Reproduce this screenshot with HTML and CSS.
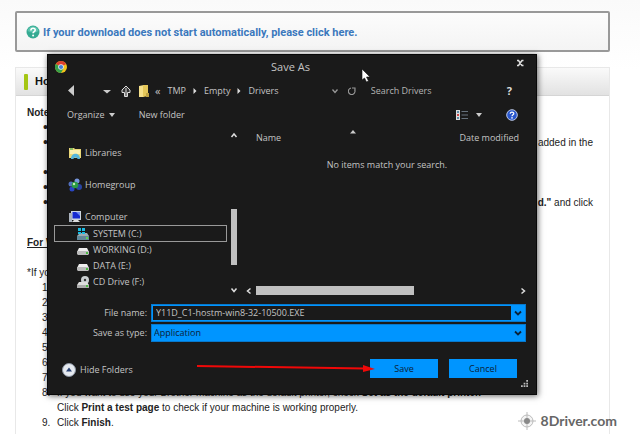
FILE: index.html
```html
<!DOCTYPE html>
<html lang="en">
<head>
    <meta charset="UTF-8">
    <meta name="viewport" content="width=device-width, initial-scale=1.0">
    <title>Driver Download</title>
    <link rel="stylesheet" href="styles.css">
</head>
<body>
    <main class="page">
        <div class="notice">
            <svg class="notice-icon" viewBox="0 0 14 14">
                <circle cx="7" cy="7" r="6.5" fill="#35aa92"/>
                <path d="M1.5 6a5.6 5.6 0 0 1 11 0q-5 3-11 0z" fill="#5cc4ae"/>
                <path d="M4.9 5.4c0-3 4.4-2.7 4.3-.3 0 1.600-2.100 1.500-2.100 3.200" fill="none" stroke="#fff" stroke-width="1.6"/>
                <circle cx="7.100" cy="10.500" r="1" fill="#fff"/>
            </svg>
            <a href="#">If your download does not start automatically, please click here.</a>
        </div>

        <section class="panel">
            <h2 class="panel-header"><span class="marker"></span>How to Install</h2>
            <div class="panel-body">
                <h3>Note:</h3>
                <ul>
                    <li></li>
                    <li class="tall">added in the</li>
                    <li></li>
                    <li></li>
                    <li class="tall"><span><b>d."</b> and click</span></li>
                </ul>
                <h4>For Windows</h4>
                <p>*If you</p>
                <ol>
                    <li></li>
                    <li></li>
                    <li></li>
                    <li></li>
                    <li></li>
                    <li></li>
                    <li></li>
                    <li>If you want to use your Brother machine as the default printer, check <b>Set as the default printer.</b><br>Click <b>Print a test page</b> to check if your machine is working properly.</li>
                    <li>Click <b>Finish</b>.</li>
                </ol>
            </div>
        </section>
    </main>

    <!-- Save As window -->
    <div class="dialog" role="dialog" aria-label="Save As">
        <div class="titlebar">
            <svg class="icon-12" viewBox="0 0 12 12">
                <circle cx="6" cy="6" r="6" fill="#f2c31b"/>
                <path d="M6 6 .8 3A6 6 0 0 1 11.200 3z" fill="#dd4030"/>
                <path d="M6 6 .8 3A6 6 0 0 0 6 12l2.600-4.500z" fill="#36a04a"/>
                <circle cx="6" cy="6" r="2.800" fill="#eee"/>
                <circle cx="6" cy="6" r="2.100" fill="#4481d8"/>
            </svg>
            <span class="title">Save As</span>
            <button class="close" aria-label="Close">
                <svg class="icon-8" viewBox="0 0 8 8"><path d="M1 1.500h1.500L6 6.500h1.500M7.500 1.500H6L2.500 6.500H1" stroke="#ddd" stroke-width="1.500" fill="none"/></svg>
            </button>
        </div>

        <div class="navbar">
            <button class="back" aria-label="Back"><svg class="icon-12" viewBox="0 0 12 12"><path d="M9 0v11L3 5.500z" fill="#ccc"/></svg></button>
            <button aria-label="Recent"><svg class="icon-8" viewBox="0 0 8 8"><path d="M0 3h8L4 6.500z" fill="#ccc"/></svg></button>
            <button aria-label="Up"><svg class="icon-12" viewBox="0 0 12 12"><path d="M6 1 2 5v2.500h2.500V11.500h3V7.500H10V5z" fill="#333" stroke="#ddd"/><path d="M6 3v8" stroke="#ddd"/></svg></button>
            <div class="crumbs">
                <svg class="icon-12" viewBox="0 0 12 12"><path d="M1 1 6 0v12H1z" fill="#f5e08a"/><path d="M5 0h5v11l-5 1z" fill="#e4c75a"/><path d="M8 8h3v4H8z" fill="#bfa343"/></svg>
                <span>«</span>
                <a href="#">TMP</a>
                <svg class="sep" viewBox="0 0 4 8"><path d="M0 0v8l4-4z" fill="#ddd"/></svg>
                <a href="#">Empty</a>
                <svg class="sep" viewBox="0 0 4 8"><path d="M0 0v8l4-4z" fill="#ddd"/></svg>
                <a href="#">Drivers</a>
            </div>
            <button aria-label="Previous locations"><svg class="icon-8" viewBox="0 0 8 8"><path d="M1.500 2.500 4 5.500l2.500-3" stroke="#999" stroke-width="1.300" fill="none"/></svg></button>
            <button aria-label="Refresh"><svg class="icon-8" viewBox="0 0 8 8"><path d="M3 1A3.300 3.300 0 1 0 6.500 2.500M4 1h3v3" stroke="#999" stroke-width="1.100" fill="none"/></svg></button>
            <input class="search" type="text" placeholder="Search Drivers" aria-label="Search Drivers">
            <button class="tip" aria-label="Tip">?</button>
        </div>

        <div class="toolbar">
            <button>Organize <svg class="icon-6" viewBox="0 0 6 6"><path d="M0 1h6L3 5z" fill="#ccc"/></svg></button>
            <button>New folder</button>
            <div class="view">
                <button aria-label="Change view">
                    <svg class="icon-12" viewBox="0 0 12 12"><path d="M0 1h4v10H0z" fill="#ddd"/><path d="M1 2h2v2H1zM1 8h2v2H1z" fill="#5d8aa5"/><path d="M1 5h2v2H1z" fill="#c44"/><path d="M5.500 2.500H12M5.500 6H12M5.500 9.500H12" stroke="#66717c"/></svg>
                    <svg class="icon-6" viewBox="0 0 6 6"><path d="M0 1h6L3 5z" fill="#ccc"/></svg>
                </button>
                <button aria-label="Help">
                    <svg class="icon-12" viewBox="0 0 12 12"><circle cx="6" cy="6" r="5.300" fill="#2856cc" stroke="#bbc7e4"/><path d="M4.200 4.700c0-2.300 3.700-2 3.600-.2 0 1.300-1.800 1.200-1.800 2.700" stroke="#fff" stroke-width="1.200" fill="none"/><circle cx="6" cy="8.900" r=".8" fill="#fff"/></svg>
                </button>
            </div>
        </div>

        <div class="browser">
            <nav class="tree">
                <a href="#" class="root">
                    <svg class="icon-14" viewBox="0 0 14 14"><path d="M1 2h5l1 1h6v9H1z" fill="#ead778"/><path d="M2 4h10v4H2z" fill="#faf0b0"/><path d="M3 13c0-7 9-7 9 0H9.500c0-2-4-2-4 0z" fill="#55b5dc"/><path d="M2 2h3v2H2z" fill="#8bbd62"/></svg>
                    Libraries
                </a>
                <a href="#" class="root">
                    <svg class="icon-14" viewBox="0 0 14 14"><circle cx="3" cy="6" r="2.500" fill="#5270bd"/><circle cx="9" cy="3" r="2.500" fill="#7696dd"/><circle cx="11" cy="9" r="3" fill="#2946a3"/><circle cx="4" cy="11" r="2.500" fill="#2946c3"/><circle cx="7" cy="7" r="3.300" fill="#2a9b45"/><circle cx="6" cy="6" r="1.200" fill="#c3ecb5"/></svg>
                    Homegroup
                </a>
                <a href="#" class="root">
                    <svg class="icon-14" viewBox="0 0 14 14"><path d="M3 1h10v9H3z" fill="#ccd5df"/><path d="M4.500 2h7.500v6.500H4.500z" fill="#162ad0"/><path d="M8 2h4v4z" fill="#6f8af0"/><path d="M1 3h3v9H1z" fill="#aab2bd"/><path d="M6 10h4l2 2H4z" fill="#ddd"/></svg>
                    Computer
                </a>
                <a href="#" class="drive selected">
                    <svg class="icon-12" viewBox="0 0 12 12"><path d="M1 7 3 5h7l2 3v4H0V8z" fill="#9eabb1"/><path d="M0 8h12v4H0z" fill="#62889a"/><path d="M1 0h3v3H1zM5 0h3v3H5zM1 4h3v2H1zM5 4h3v2H5z" fill="#19bde4"/><path d="M9 9h2v2H9z" fill="#60d452"/></svg>
                    SYSTEM (C:)
                </a>
                <a href="#" class="drive">
                    <svg class="icon-12" viewBox="0 0 12 12"><path d="m0 8 2-4h8l2 4z" fill="#eee"/><path d="M0 7h12v3l-1 1H1l-1-1z" fill="#bbb"/><path d="M9 8h2v2H9z" fill="#4bbb42"/></svg>
                    WORKING (D:)
                </a>
                <a href="#" class="drive">
                    <svg class="icon-12" viewBox="0 0 12 12"><path d="m0 8 2-4h8l2 4z" fill="#eee"/><path d="M0 7h12v3l-1 1H1l-1-1z" fill="#bbb"/><path d="M9 8h2v2H9z" fill="#4bbb42"/></svg>
                    DATA (E:)
                </a>
                <a href="#" class="drive">
                    <svg class="icon-12" viewBox="0 0 12 12"><circle cx="8" cy="4" r="4" fill="#c9ced1"/><circle cx="8" cy="4" r="1.200" fill="#333"/><path d="m0 9 2-3h8l2 3v3H0z" fill="#ddd"/><path d="M0 9h12v3H0z" fill="#aaa"/><path d="M9 9h2v2H9z" fill="#4bbb42"/></svg>
                    CD Drive (F:)
                </a>
            </nav>
            <div class="vscroll">
                <svg class="icon-8" viewBox="0 0 8 8"><path d="M1.500 6 4 3l2.500 3" stroke="#ddd" stroke-width="1.500" fill="none"/></svg>
                <div class="vtrack"><div class="vthumb"></div></div>
                <svg class="icon-8" viewBox="0 0 8 8"><path d="M1.500 2.500 4 5.500l2.500-3" stroke="#ddd" stroke-width="1.500" fill="none"/></svg>
            </div>
            <div class="files">
                <div class="columns">
                    <span>Name</span>
                    <svg class="icon-6" viewBox="0 0 6 6"><path d="M0 3.500h6L3 0z" fill="#ccc"/></svg>
                    <span>Date modified</span>
                </div>
                <p class="empty">No items match your search.</p>
                <div class="hscroll">
                    <svg class="icon-8" viewBox="0 0 8 8"><path d="M5.500 1.500 2.500 4l3 2.500" stroke="#ddd" stroke-width="1.500" fill="none"/></svg>
                    <div class="htrack"><div class="hthumb"></div></div>
                    <svg class="icon-8" viewBox="0 0 8 8"><path d="M3.500 1.500 6.500 4l-3 2.500" stroke="#ddd" stroke-width="1.500" fill="none"/></svg>
                </div>
            </div>
        </div>

        <form class="fields">
            <label for="fileName">File name:</label>
            <div class="combo">
                <input id="fileName" type="text" value="Y11D_C1-hostm-win8-32-10500.EXE">
                <svg class="icon-8" viewBox="0 0 8 8"><path d="M1 2.500 4 5.500l3-3" stroke="#0a2238" stroke-width="1.800" fill="none"/></svg>
            </div>
            <label for="fileType">Save as type:</label>
            <div class="combo">
                <select id="fileType"><option>Application</option></select>
                <svg class="icon-8" viewBox="0 0 8 8"><path d="M1 2.500 4 5.500l3-3" stroke="#0a2238" stroke-width="1.800" fill="none"/></svg>
            </div>
        </form>

        <div class="actions">
            <button class="hide">
                <svg class="icon-14" viewBox="0 0 14 14"><circle cx="7" cy="7" r="6.500" fill="#e6eaf0" stroke="#8b94a2"/><path d="M4 8.500h6L7 4.500z" fill="#284173"/></svg>
                Hide Folders
            </button>
            <button class="primary">Save</button>
            <button class="primary">Cancel</button>
        </div>

        <svg class="grip" viewBox="0 0 8 8"><path d="M6 0h2v2H6zM3 3h2v2H3zM6 3h2v2H6zM0 6h2v2H0zM3 6h2v2H3zM6 6h2v2H6z" fill="#bbb"/></svg>
        <svg class="arrow" viewBox="0 0 178 8"><path d="M0 2 168 4.500" stroke="#f00808" stroke-width="2"/><path d="M166 1v7l12-3z" fill="#f00808"/></svg>
        <svg class="cursor" viewBox="0 0 10 15"><path d="M1 1v11l2.500-2 2 4 2-1-2-4H9z" fill="#fff" stroke="#111" stroke-width=".6"/></svg>
    </div>

    <div class="watermark">
        <svg viewBox="0 0 18 18"><circle cx="9" cy="9" r="6" fill="#f4f4f4" stroke="#bbb"/><path d="M9 0v18M0 9h18" stroke="#bbb"/><circle cx="9" cy="9" r="3" fill="#888"/></svg>
        8Driver.com
    </div>
</body>
</html>
```
FILE: styles.css
```css
* {
    margin: 0;
    padding: 0;
    box-sizing: border-box;
}

body {
    height: 100vh;
    overflow: hidden;
    position: relative;
    background: linear-gradient(#fafafa, #fff 70px);
    font: 10px/15px "Liberation Sans", Arial, sans-serif;
    color: #222;
}

svg {
    display: block;
    flex: none;
}

.page {
    display: flex;
    flex-direction: column;
    gap: 15px;
    height: 100%;
    padding: 11px 30px 0 15px;
}

/* Download notice */
.notice {
    display: flex;
    align-items: center;
    gap: 3px;
    flex: none;
    height: 41px;
    padding: 1px 9px 0;
    border: 2px solid #999;
    border-radius: 2px;
    background: linear-gradient(#fcfcfc, #f4f4f4);
}

.notice a {
    color: #3b78bd;
    font-family: Roboto, Arial, sans-serif;
    font-size: 11px;
    font-weight: bold;
    text-decoration: none;
}

.notice-icon {
    width: 14px;
    height: 14px;
}

/* Instructions */
.panel {
    flex: 1;
    border: 1px solid #e8e8e8;
    border-bottom: none;
    background: #fff;
}

.panel-header {
    display: flex;
    align-items: center;
    gap: 7px;
    height: 28px;
    padding-left: 8px;
    border-bottom: 1px solid #d5d5d5;
    background: linear-gradient(#fafafa, #e2e2e2);
    font-size: 11px;
    color: #111;
}

.marker {
    width: 4px;
    height: 16px;
    border-radius: 1px;
    background: #a4c614;
}

.panel-body {
    padding: 9px 16px 0 11px;
}

.panel-body h3,
.panel-body h4 {
    font-size: 10px;
}

.panel-body h4 {
    margin: 10px 0 15px;
    text-decoration: underline;
}

.panel-body ul,
.panel-body ol {
    padding-left: 30px;
    list-style: none;
}

.panel-body li {
    min-height: 15px;
}

.panel-body ul li {
    display: flex;
    justify-content: space-between;
    margin-left: -14px;
}

.panel-body ul li::before {
    content: "•";
    font-size: 14px;
}

.panel-body ol li {
    counter-increment: step;
}

.panel-body ol li::before {
    content: counter(step) ".";
    float: left;
    margin-left: -15px;
}

.panel-body .tall {
    min-height: 30px;
}

/* Save As window */
.dialog {
    position: absolute;
    top: 54px;
    left: 47px;
    right: 103px;
    padding: 0 10px 16px 6px;
    border: 1px solid #080808;
    background: #1a1a1a;
    box-shadow: 1px 1px 6px rgba(0, 0, 0, 0.6);
    font: 9px/16px "Open Sans", "Noto Sans", sans-serif;
    color: #c4c4c4;
}

.dialog button,
.dialog input,
.dialog select {
    border: none;
    background: none;
    font: inherit;
    color: inherit;
}

.dialog button {
    display: flex;
    align-items: center;
    gap: 4px;
}

.dialog a {
    color: inherit;
    text-decoration: none;
}

.icon-6 {
    width: 6px;
    height: 6px;
}

.icon-8 {
    width: 8px;
    height: 8px;
}

.icon-12 {
    width: 12px;
    height: 12px;
}

.icon-14 {
    width: 14px;
    height: 14px;
}

.titlebar {
    display: flex;
    align-items: center;
    height: 24px;
    padding-left: 1px;
}

.title {
    flex: 1;
    text-align: center;
    font-size: 11px;
}

.dialog .close {
    align-self: flex-start;
    padding: 4px 2px;
}

.navbar {
    display: flex;
    align-items: center;
    gap: 9px;
    height: 24px;
    padding: 0 14px 0 11px;
}

.navbar .back {
    margin-right: 17px;
}

.crumbs {
    display: flex;
    align-items: center;
    gap: 7px;
    flex: 1;
    margin-left: -3px;
}

.crumbs span {
    margin-left: -2px;
    font-size: 11px;
}

.sep {
    width: 4px;
    height: 6px;
}

.dialog .search {
    width: 133px;
    padding-left: 6px;
}

.search::placeholder {
    color: #b4b4b4;
}

.dialog .tip {
    font-size: 11px;
    font-weight: bold;
    color: #ddd;
}

.toolbar {
    display: flex;
    align-items: center;
    gap: 24px;
    height: 24px;
    padding: 0 8px 0 13px;
}

.view {
    display: flex;
    gap: 24px;
    margin-left: auto;
}

.dialog .view button:first-child {
    gap: 8px;
}

/* Folder tree and file list */
.browser {
    display: flex;
    height: 168px;
}

.tree {
    flex: 0 0 173px;
    padding-top: 17px;
}

.tree a {
    display: flex;
    align-items: center;
    gap: 3px;
    height: 16px;
    padding-left: 14px;
}

.tree .root {
    height: 17px;
}

.tree .root + .root {
    margin-top: 15px;
}

.tree .drive {
    padding-left: 23px;
    gap: 4px;
}

.tree .selected {
    height: 17px;
    padding-left: 22px;
    border: 1px solid #999;
}

.vscroll {
    display: flex;
    flex-direction: column;
    align-items: center;
    width: 14px;
    padding: 4px 0 1px;
}

.vtrack {
    flex: 1;
    padding-top: 70px;
}

.vthumb {
    width: 6px;
    height: 56px;
    background: #c0c0c0;
}

.files {
    flex: 1;
    display: flex;
    flex-direction: column;
    padding-left: 4px;
}

.columns {
    display: grid;
    grid-template-columns: 94px 1fr auto;
    padding: 3px 7px 0 11px;
}

.empty {
    margin-top: 11px;
    padding-left: 3px;
    text-align: center;
}

.hscroll {
    display: flex;
    align-items: center;
    gap: 3px;
    margin-top: auto;
}

.htrack {
    flex: 1;
}

.hthumb {
    width: 61%;
    height: 9px;
    background: #c0c0c0;
}

.fields {
    display: grid;
    grid-template-columns: 93px 1fr;
    gap: 2px 4px;
    margin-top: 9px;
}

.fields label {
    line-height: 18px;
    text-align: right;
}

.combo {
    display: grid;
    grid-template-columns: 1fr 14px;
    align-items: center;
    height: 18px;
    background: #0095ff;
    border: 1px solid #0878cc;
}

.dialog .combo input {
    height: 14px;
    margin-left: 1px;
    padding: 0 3px;
    background: #1a1a1a;
}

.combo svg {
    grid-area: 1 / 2;
    margin-left: 3px;
    pointer-events: none;
}

.dialog .combo select {
    grid-area: 1 / 1 / 2 / 3;
    height: 16px;
    padding-left: 2px;
    appearance: none;
    color: #0a2238;
}

.actions {
    display: flex;
    align-items: center;
    gap: 11px;
    margin-top: 17px;
    padding: 0 9px 0 8px;
}

.dialog .hide {
    margin-right: auto;
    padding-top: 3px;
}

.dialog .primary {
    justify-content: center;
    width: 68px;
    height: 19px;
    background: #0095ff;
    color: #0a2238;
}

.grip {
    position: absolute;
    right: 8px;
    bottom: 7px;
    width: 7px;
    height: 7px;
}

.arrow {
    position: absolute;
    right: 161px;
    bottom: 22px;
    width: 178px;
    height: 8px;
}

.cursor {
    position: absolute;
    top: 13px;
    right: 165px;
    width: 10px;
    height: 15px;
}

.watermark {
    position: absolute;
    right: 23px;
    bottom: 4px;
    display: flex;
    align-items: center;
    gap: 5px;
    font: bold 14px/18px "Comic Sans MS", Lato, sans-serif;
    color: #666;
}

.watermark svg {
    width: 18px;
    height: 18px;
}
```
